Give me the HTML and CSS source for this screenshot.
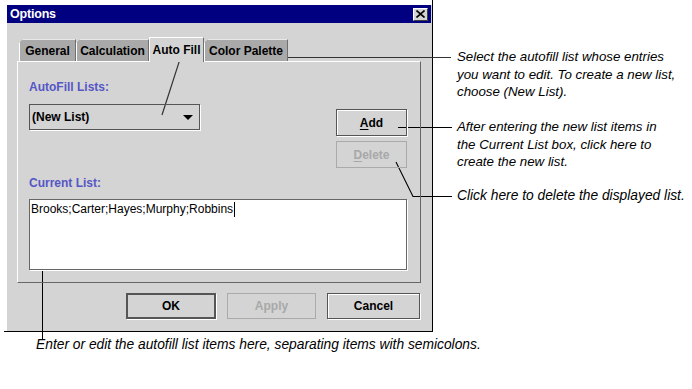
FILE: index.html
```html
<!DOCTYPE html>
<html>
<head>
<meta charset="utf-8">
<title>Options</title>
<link rel="stylesheet" href="styles.css">
</head>
<body>
<div class="page">
  <div class="frame">
    <div class="dialog">
      <div class="titlebar">
        <span class="title">Options</span>
        <span class="close"><svg width="9" height="8" viewBox="0 0 9 8"><path d="M0.5 0.5 L8.5 7.5 M8.5 0.5 L0.5 7.5" stroke="#000" stroke-width="1.6" fill="none"/></svg></span>
      </div>
      <div class="body">
        <div class="tabs">
          <div class="tab t-general">General</div>
          <div class="tab t-calc">Calculation</div>
          <div class="tab active t-auto">Auto Fill</div>
          <div class="tab t-color">Color Palette</div>
        </div>
        <div class="panel">
          <div class="top">
            <div class="left">
              <div class="label">AutoFill Lists:</div>
              <div class="combo"><span>(New List)</span><span class="arrow"></span></div>
            </div>
            <div class="right">
              <div class="btn side"><u>A</u>dd</div>
              <div class="btn side disabled delete"><u>D</u>elete</div>
            </div>
          </div>
          <div class="label cur">Current List:</div>
          <div class="textbox">Brooks;Carter;Hayes;Murphy;Robbins<span class="caret"></span></div>
        </div>
        <div class="actions">
          <div class="btn default ok">OK</div>
          <div class="btn disabled apply">Apply</div>
          <div class="btn cancel">Cancel</div>
        </div>
      </div>
    </div>
  </div>

  <svg class="callouts" width="692" height="389" viewBox="0 0 692 389">
    <path d="M162 115 L180.5 57.5 L451 57.5" stroke="#333" stroke-width="1.2" fill="none"/>
    <path d="M398 127.5 L452 127.5" stroke="#000" stroke-width="1" fill="none"/>
    <path d="M396 162 L413 196.5 L452 196.5" stroke="#000" stroke-width="1.1" fill="none"/>
    <path d="M42.5 250 L42.5 340" stroke="#000" stroke-width="1" fill="none"/>
  </svg>

  <p class="note n-select">Select the autofill list whose entries<br>you want to edit. To create a new list,<br>choose (New List).</p>
  <p class="note n-add">After entering the new list items in<br>the Current List box, click here to<br>create the new list.</p>
  <p class="note n-delete">Click here to delete the displayed list.</p>
  <p class="note n-enter">Enter or edit the autofill list items here, separating items with semicolons.</p>
</div>
</body>
</html>
```

FILE: styles.css
```css
* { box-sizing: border-box; }
html, body { margin: 0; padding: 0; background: #fff; }
body { font-family: "Liberation Sans", Arial, sans-serif; }

.page { position: relative; width: 692px; height: 389px; overflow: hidden; }

.frame {
  margin-left: 4px;
  width: 429px;
  height: 332px;
  padding: 5px 0 0 3px;
  border-right: 1px solid #000;
  border-bottom: 1px solid #000;
}

.dialog { background: #d4d4d4; height: 100%; width: 425px; }

.titlebar {
  height: 18px;
  margin-right: 1px;
  background: #000080;
  display: flex;
  align-items: center;
  justify-content: space-between;
  padding: 0 3px 0 3px;
}
.title { color: #fff; font-weight: bold; font-size: 12.5px; letter-spacing: -0.2px; }
.close {
  width: 15px; height: 13px;
  background: #d4d4d4;
  border-top: 1px solid #fff; border-left: 1px solid #fff;
  border-right: 1px solid #404040; border-bottom: 1px solid #404040;
  display: flex; align-items: center; justify-content: center;
}
.close svg { display: block; }

.body { padding-top: 14px; }

.tabs { display: flex; align-items: flex-end; margin-left: 12px; height: 24px; position: relative; z-index: 2; }
.tab {
  height: 22px;
  background: #a9a9a9;
  border-top: 1px solid #e8e8e8;
  border-left: 1px solid #fff;
  border-right: 1px solid #707070;
  font-size: 12px; font-weight: bold; color: #000;
  display: flex; align-items: center; justify-content: center;
  clip-path: polygon(4px 0, 100% 0, 100% 100%, 0 100%, 0 4px);
  padding-top: 1px;
}
.tab.active {
  height: 25px;
  margin-bottom: -1px;
  background: #d4d4d4;
  border-top: 1px solid #fff;
  padding-bottom: 1px;
  clip-path: none;
}
.t-general { width: 57px; }
.t-calc { width: 73px; }
.t-auto { width: 55px; }
.t-color { width: 84px; }

.panel {
  margin-left: 10px;
  width: 404px;
  border-top: 1px solid #fff;
  border-left: 1px solid #fff;
  border-right: 1px solid #666;
  border-bottom: 1px solid #666;
  padding: 18px 13px 12px 11px;
  position: relative; z-index: 1;
}

.top { display: flex; justify-content: space-between; }
.label { font-size: 12px; font-weight: bold; color: #5656c6; line-height: 14px; height: 14px; }
.label.cur { margin-top: 8px; }

.combo {
  margin-top: 10px;
  width: 171px; height: 26px;
  border: 1px solid #555;
  box-shadow: 1px 1px 0 #fff;
  display: flex; align-items: center; justify-content: space-between;
  padding: 0 6px 0 2px;
  font-size: 12px; font-weight: bold;
}
.arrow {
  width: 0; height: 0;
  border-left: 5px solid transparent;
  border-right: 5px solid transparent;
  border-top: 5px solid #000;
}

.right { padding-top: 29px; display: flex; flex-direction: column; gap: 5px; }

.btn {
  height: 26px;
  border: 1px solid #555;
  box-shadow: inset 1px 1px 0 #fff, 1px 1px 0 #fff;
  display: flex; align-items: center; justify-content: center;
  font-size: 12px; font-weight: bold; color: #000;
}
.btn u { text-underline-offset: 2px; }
.btn.side { width: 71px; height: 27px; }
.btn.disabled { border-color: #aaa; color: #a8a8a8; box-shadow: none; }
.btn.default { border: 2px solid #555; box-shadow: 1px 1px 0 #fff; }

.textbox {
  margin-top: 9px;
  width: 378px; height: 71px;
  background: #fff;
  border: 1px solid #666;
  box-shadow: 1px 1px 0 #fff;
  font-size: 12px; color: #000;
  padding: 2px 1px;
  line-height: 15px;
}
.caret { display: inline-block; width: 1px; height: 15px; background: #000; vertical-align: top; margin-left: 1px; }

.actions { display: flex; justify-content: flex-end; gap: 11px; margin-top: 10px; padding-right: 12px; }
.ok { width: 90px; }
.apply { width: 89px; }
.cancel { width: 93px; }

.callouts { position: absolute; left: 0; top: 0; }

.note {
  position: absolute; margin: 0;
  font-family: "Liberation Sans", Arial, sans-serif;
  font-style: italic; font-size: 13.3px; line-height: 17.5px;
  color: #000; white-space: nowrap;
}
.n-select { left: 457px; top: 48px; }
.n-add { left: 457px; top: 118px; }
.n-delete { left: 457px; top: 187px; font-size: 13.8px; }
.n-enter { left: 36px; top: 336px; font-size: 13.8px; }
```
